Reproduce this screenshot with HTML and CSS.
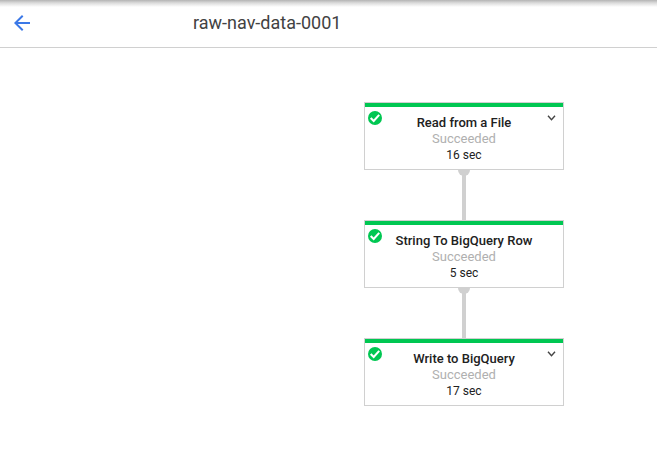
FILE: index.html
```html
<!DOCTYPE html>
<html lang="en">
<head>
<meta charset="utf-8">
<title>raw-nav-data-0001</title>
<link rel="stylesheet" href="styles.css">
</head>
<body>
<header class="topbar">
  <svg class="back" viewBox="0 0 24 24" aria-hidden="true"><path d="M20 11H7.83l5.59-5.59L12 4l-8 8 8 8 1.41-1.41L7.83 13H20v-2z"/></svg>
  <h1 class="title">raw-nav-data-0001</h1>
</header>
<main class="graph">
  <section class="step">
    <svg class="check" viewBox="0 0 14 14" aria-hidden="true"><circle cx="7" cy="7" r="7"/><path d="M2.7 6.9l3 3 5.5-6"/></svg>
    <svg class="chevron" viewBox="0 0 9 6" aria-hidden="true"><path d="M1 .7l3.5 4L8 .7"/></svg>
    <h2 class="name">Read from a File</h2>
    <p class="status">Succeeded</p>
    <p class="time">16 sec</p>
  </section>
  <div class="edge"></div>
  <section class="step">
    <svg class="check" viewBox="0 0 14 14" aria-hidden="true"><circle cx="7" cy="7" r="7"/><path d="M2.7 6.9l3 3 5.5-6"/></svg>
    <h2 class="name">String To BigQuery Row</h2>
    <p class="status">Succeeded</p>
    <p class="time">5 sec</p>
  </section>
  <div class="edge"></div>
  <section class="step">
    <svg class="check" viewBox="0 0 14 14" aria-hidden="true"><circle cx="7" cy="7" r="7"/><path d="M2.7 6.9l3 3 5.5-6"/></svg>
    <svg class="chevron" viewBox="0 0 9 6" aria-hidden="true"><path d="M1 .7l3.5 4L8 .7"/></svg>
    <h2 class="name">Write to BigQuery</h2>
    <p class="status">Succeeded</p>
    <p class="time">17 sec</p>
  </section>
</main>
</body>
</html>
```
FILE: styles.css
```css
* {
  box-sizing: border-box;
}

body {
  margin: 0;
  background: #fff;
  color: #212121;
  font-family: Roboto, "Liberation Sans", sans-serif;
}

h1, h2, p {
  margin: 0;
}

.topbar {
  display: flex;
  align-items: center;
  height: 48px;
  padding: 0 10px 1px;
  border-bottom: 1px solid #d0d0d0;
  background: linear-gradient(#b4b4b4, #dcdcdc 3px, #fff 7px);
}

.back {
  width: 24px;
  height: 24px;
  fill: #3b78e7;
}

.title {
  margin-left: 159px;
  font-size: 18px;
  font-weight: 400;
  line-height: 24px;
  color: #424242;
}

.graph {
  width: 200px;
  margin: 54px 0 0 364px;
}

.step {
  position: relative;
  height: 68px;
  padding-top: 12px;
  border: 1px solid #d0d0d0;
  background: linear-gradient(#00c752 4px, #fff 4px);
  text-align: center;
}

.check {
  position: absolute;
  left: 3px;
  top: 8px;
  width: 14px;
  height: 14px;
  fill: #00c752;
}

.check path {
  fill: none;
  stroke: #fff;
  stroke-width: 2.1;
}

.chevron {
  position: absolute;
  left: 182px;
  top: 12px;
  width: 9px;
  height: 6px;
  fill: none;
  stroke: #444;
  stroke-width: 1.4;
}

.name {
  font-size: 13px;
  font-weight: 500;
  line-height: 16px;
}

.status {
  font-size: 13px;
  line-height: 16px;
  color: #b0b0b0;
}

.time {
  font-size: 12px;
  line-height: 16px;
}

.edge {
  position: relative;
  width: 4px;
  height: 50px;
  margin: 0 auto;
  background: #d0d0d0;
}

.edge::before {
  content: "";
  position: absolute;
  left: -4px;
  top: 0;
  width: 12px;
  height: 6px;
  border-radius: 0 0 6px 6px;
  background: #d0d0d0;
}
```
